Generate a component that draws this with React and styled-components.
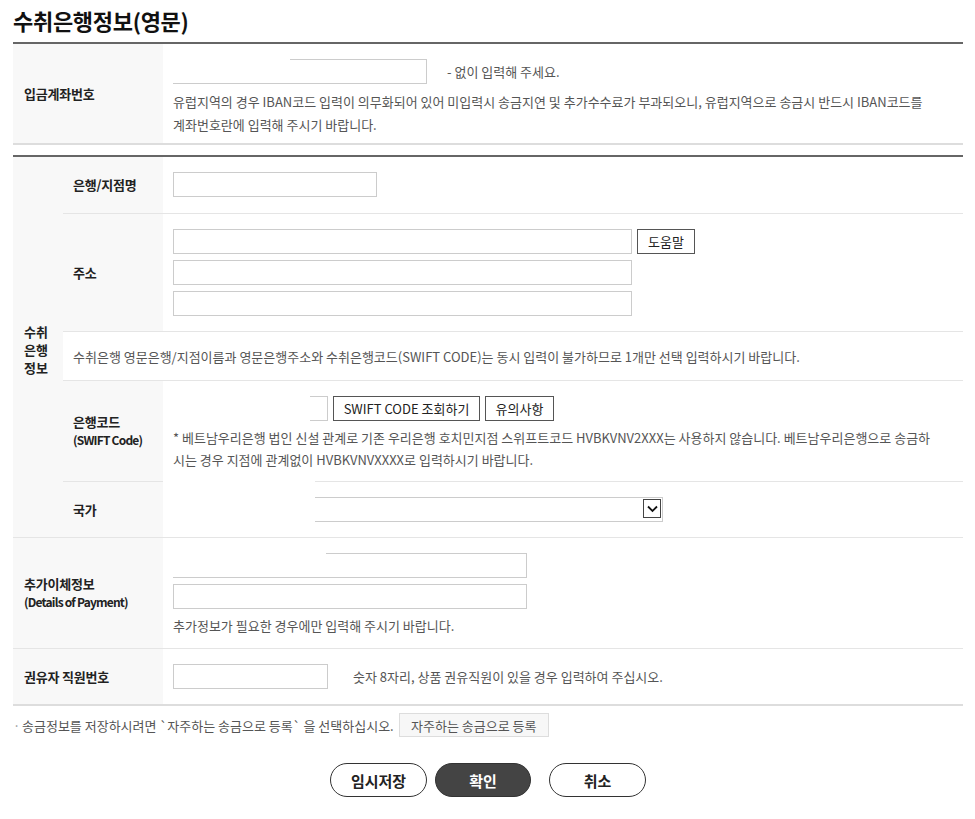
import React from 'react';
import styled, { createGlobalStyle } from 'styled-components';

const Global = createGlobalStyle`
  html, body { margin: 0; padding: 0; background: #fff; }
  body {
    font-family: "Noto Sans CJK KR", "Noto Sans", sans-serif;
    color: #222;
  }
  * { box-sizing: border-box; }
`;

const Page = styled.div`
  width: 975px;
  padding: 6px 12px 0 13px;
`;

const Title = styled.h2`
  margin: 0 0 8px;
  font-size: 22px;
  line-height: 28px;
  font-weight: 700;
  color: #111;
  letter-spacing: -0.3px;
`;

const Table = styled.div`
  border-top: 2px solid #666;
  border-bottom: 2px solid #ddd;
  margin-bottom: ${p => p.$mb || 0}px;
`;

const Row = styled.div`
  display: grid;
  grid-template-columns: 150px 1fr;
  height: ${p => p.$h}px;
  border-bottom: ${p => (p.$last ? 'none' : '1px solid #e5e5e5')};
`;

const Label = styled.div`
  background: #f8f8f8;
  padding-left: 11px;
  display: flex;
  flex-direction: column;
  justify-content: center;
  font-size: 13px;
  font-weight: 700;
  line-height: 18px;
  color: #222;
  letter-spacing: -0.2px;
`;

const Sub = styled.span`
  font-size: 12px;
  letter-spacing: -0.8px;
`;

const Group = styled.div`
  display: grid;
  grid-template-columns: 50px 100px 1fr;
  grid-template-rows: 57px 118px 49px 101px 56px;
`;

const GroupLabel = styled.div`
  grid-row: 1 / span 5;
  background: #f8f8f8;
  border-bottom: 1px solid #e5e5e5;
  padding: 5px 0 0 11px;
  display: flex;
  align-items: center;
  font-size: 13px;
  font-weight: 700;
  line-height: 18px;
`;

const SubLabel = styled.div`
  background: #f8f8f8;
  border-bottom: 1px solid #e5e5e5;
  padding-left: 10px;
  display: flex;
  flex-direction: column;
  justify-content: center;
  font-size: 13px;
  font-weight: 700;
  line-height: 18px;
  letter-spacing: -0.2px;
`;

const Cell = styled.div`
  position: relative;
  padding: 15px 10px 0;
  border-bottom: ${p => (p.$nob ? 'none' : '1px solid #e5e5e5')};
  background: #fff;
`;

const Notice = styled.div`
  grid-column: 2 / span 2;
  border-bottom: 1px solid #e5e5e5;
  display: flex;
  align-items: center;
  padding-left: 10px;
  font-size: 13px;
  color: #555;
  background: #fff;
`;

const Line = styled.div`
  display: flex;
  align-items: center;
  gap: 5px;
`;

const Stack = styled.div`
  display: flex;
  flex-direction: column;
  gap: 6px;
`;

const Field = styled.div`
  position: relative;
  width: ${p => p.$w}px;
  flex: none;
`;

const Input = styled.input`
  display: block;
  width: 100%;
  height: 25px;
  border: 1px solid #ccc;
  padding: 0 6px;
  font: inherit;
  font-size: 12px;
  background: #fff;
  outline: none;
`;

const Mask = styled.span`
  position: absolute;
  left: ${p => p.$l}px;
  top: ${p => p.$t}px;
  width: ${p => p.$w}px;
  height: ${p => p.$h}px;
  background: #fff;
  z-index: 2;
`;

const Hint = styled.span`
  margin-left: ${p => p.$ml}px;
  font-size: 13px;
  color: #555;
`;

const Desc = styled.p`
  margin: 6px 0 0;
  font-size: 13px;
  line-height: ${p => p.$lh || 22}px;
  color: #555;
  white-space: nowrap;
`;

const SmallButton = styled.button`
  width: ${p => p.$w}px;
  height: 25px;
  padding: 0;
  border: 1px solid #555;
  background: #fff;
  font-family: inherit;
  font-size: 13px;
  color: #222;
  cursor: pointer;
`;

const SelectBox = styled.div`
  position: relative;
  width: 490px;
  height: 25px;
  border: 1px solid #ccc;
  background: #fff;
`;

const Arrow = styled.span`
  position: absolute;
  right: 1px;
  top: 1px;
  width: 18px;
  height: 19px;
  border: 1px solid #444;
  background: #fff;
  display: flex;
  align-items: center;
  justify-content: center;
`;

const Note = styled.div`
  display: flex;
  align-items: center;
  margin-top: 7px;
  font-size: 13px;
  color: #555;
`;

const Bullet = styled.span`
  width: 9px;
  color: #999;
`;

const GhostButton = styled.button`
  margin-left: 5px;
  width: 150px;
  height: 24px;
  padding: 0;
  border: 1px solid #ddd;
  background: #f7f7f7;
  font-family: inherit;
  font-size: 13px;
  color: #555;
`;

const Actions = styled.div`
  display: flex;
  justify-content: center;
  margin-top: 26px;
`;

const Pill = styled.button`
  width: ${p => p.$w}px;
  height: 34px;
  margin-left: ${p => p.$ml || 0}px;
  border-radius: 17px;
  border: 1px solid #333;
  background: ${p => (p.$primary ? '#444' : '#fff')};
  color: ${p => (p.$primary ? '#fff' : '#222')};
  font-family: inherit;
  font-size: 15px;
  font-weight: 700;
  padding: 0;
`;

export default function App() {
  return (
    <Page>
      <Global />
      <Title>수취은행정보(영문)</Title>

      <Table $mb={10}>
        <Row $h={99} $last>
          <Label>입금계좌번호</Label>
          <Cell $nob>
            <Line>
              <Field $w={254}>
                <Input />
                <Mask $l={0} $t={0} $w={117} $h={24} />
              </Field>
              <Hint $ml={15}>- 없이 입력해 주세요.</Hint>
            </Line>
            <Desc $lh={23}>
              유럽지역의 경우 IBAN코드 입력이 의무화되어 있어 미입력시 송금지연 및 추가수수료가 부과되오니, 유럽지역으로 송금시 반드시 IBAN코드를
              <br />
              계좌번호란에 입력해 주시기 바랍니다.
            </Desc>
          </Cell>
        </Row>
      </Table>

      <Table>
        <Group>
          <GroupLabel>
            수취
            <br />
            은행
            <br />
            정보
          </GroupLabel>

          <SubLabel>은행/지점명</SubLabel>
          <Cell>
            <Field $w={204}>
              <Input />
            </Field>
          </Cell>

          <SubLabel>주소</SubLabel>
          <Cell>
            <Stack>
              <Line>
                <Field $w={459}>
                  <Input />
                </Field>
                <SmallButton $w={58}>도움말</SmallButton>
              </Line>
              <Field $w={459}>
                <Input />
              </Field>
              <Field $w={459}>
                <Input />
              </Field>
            </Stack>
          </Cell>

          <Notice>
            수취은행 영문은행/지점이름과 영문은행주소와 수취은행코드(SWIFT CODE)는 동시 입력이 불가하므로 1개만 선택 입력하시기 바랍니다.
          </Notice>

          <SubLabel>
            은행코드
            <Sub>(SWIFT Code)</Sub>
          </SubLabel>
          <Cell>
            <Mask $l={0} $t={14} $w={147} $h={27} />
            <Line>
              <Field $w={155}>
                <Input />
              </Field>
              <SmallButton $w={147}>SWIFT CODE 조회하기</SmallButton>
              <SmallButton $w={69}>유의사항</SmallButton>
            </Line>
            <Desc>
              * 베트남우리은행 법인 신설 관계로 기존 우리은행 호치민지점 스위프트코드 HVBKVNV2XXX는 사용하지 않습니다. 베트남우리은행으로 송금하
              <br />
              시는 경우 지점에 관계없이 HVBKVNVXXXX로 입력하시기 바랍니다.
            </Desc>
          </Cell>

          <SubLabel>국가</SubLabel>
          <Cell>
            <Mask $l={0} $t={-2} $w={152} $h={46} />
            <SelectBox>
              <Arrow>
                <svg width="11" height="8" viewBox="0 0 11 8">
                  <path d="M1 1.5 L5.5 6 L10 1.5" fill="none" stroke="#111" strokeWidth="1.8" />
                </svg>
              </Arrow>
            </SelectBox>
          </Cell>
        </Group>

        <Row $h={111}>
          <Label>
            추가이체정보
            <Sub>(Details of Payment)</Sub>
          </Label>
          <Cell $nob>
            <Stack>
              <Field $w={354}>
                <Input />
                <Mask $l={0} $t={0} $w={153} $h={24} />
              </Field>
              <Field $w={354}>
                <Input />
              </Field>
            </Stack>
            <Desc>추가정보가 필요한 경우에만 입력해 주시기 바랍니다.</Desc>
          </Cell>
        </Row>

        <Row $h={55} $last>
          <Label>권유자 직원번호</Label>
          <Cell $nob>
            <Line>
              <Field $w={155}>
                <Input />
              </Field>
              <Hint $ml={20}>숫자 8자리, 상품 권유직원이 있을 경우 입력하여 주십시오.</Hint>
            </Line>
          </Cell>
        </Row>
      </Table>

      <Note>
        <Bullet>·</Bullet>
        송금정보를 저장하시려면 `자주하는 송금으로 등록` 을 선택하십시오.
        <GhostButton>자주하는 송금으로 등록</GhostButton>
      </Note>

      <Actions>
        <Pill $w={97}>임시저장</Pill>
        <Pill $w={96} $ml={8} $primary>확인</Pill>
        <Pill $w={97} $ml={18}>취소</Pill>
      </Actions>
    </Page>
  );
}
